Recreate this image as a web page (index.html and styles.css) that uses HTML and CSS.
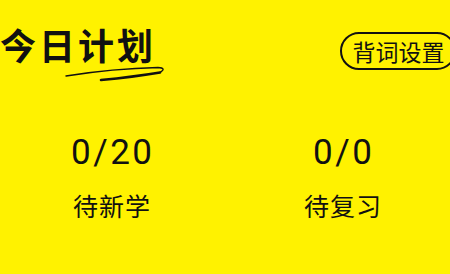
FILE: index.html
```html
<!DOCTYPE html>
<html lang="zh-CN">
<head>
<meta charset="utf-8">
<title>今日计划</title>
<link rel="stylesheet" href="styles.css">
</head>
<body>
<div class="card">
  <header class="header">
    <div class="title-wrap">
      <h1 class="title">今日计划</h1>
      <svg class="swoosh" width="110" height="20" viewBox="0 0 110 20" aria-hidden="true">
        <path d="M3 14 Q50 6.5 95 5.5 Q104 6 97 10.5" fill="none" stroke="#111" stroke-width="1.4" stroke-linecap="round"/>
        <path d="M97 10.5 Q70 15 38 18" fill="none" stroke="#111" stroke-width="2.6" stroke-linecap="round"/>
      </svg>
    </div>
    <button class="settings">背词设置</button>
  </header>
  <section class="stats">
    <div class="stat">
      <div class="num">0/20</div>
      <div class="label">待新学</div>
    </div>
    <div class="stat">
      <div class="num">0/0</div>
      <div class="label">待复习</div>
    </div>
  </section>
</div>
</body>
</html>
```

FILE: styles.css
```css
html, body {
  margin: 0;
  padding: 0;
}
body {
  background: #fff200;
  width: 450px;
  height: 274px;
  overflow: hidden;
  font-family: "Noto Sans CJK SC", "Noto Sans", sans-serif;
  color: #111;
}
.card {
  display: flex;
  flex-direction: column;
  width: 462px;
  margin-left: -4px;
}
.header {
  display: flex;
  justify-content: space-between;
  align-items: flex-start;
  padding: 24px 2px 0 4px;
}
.title-wrap {
  position: relative;
}
.title {
  margin: 0;
  font-size: 36px;
  line-height: 40px;
  font-weight: 700;
  letter-spacing: 3px;
}
.swoosh {
  position: absolute;
  left: 63px;
  top: 38px;
}
.settings {
  box-sizing: border-box;
  margin-top: 8px;
  height: 38px;
  width: 116px;
  padding: 0 0 0 1px;
  border: 2px solid #111;
  border-radius: 19px;
  background: transparent;
  font-family: "Noto Sans CJK SC", sans-serif;
  font-size: 23px;
  font-weight: 400;
  line-height: 1;
  letter-spacing: 0;
  color: #111;
  text-align: center;
}
.stats {
  display: grid;
  grid-template-columns: 231px 231px;
  margin-top: 63px;
}
.stat {
  display: flex;
  flex-direction: column;
  align-items: center;
}
.num {
  font-family: "Roboto", sans-serif;
  font-size: 35px;
  line-height: 40px;
  letter-spacing: 2.5px;
  margin-right: -2.5px;
  color: #111;
}
.label {
  margin-top: 17px;
  font-size: 25px;
  line-height: 30px;
  letter-spacing: 1px;
  margin-right: -1px;
  color: #111;
}
```
